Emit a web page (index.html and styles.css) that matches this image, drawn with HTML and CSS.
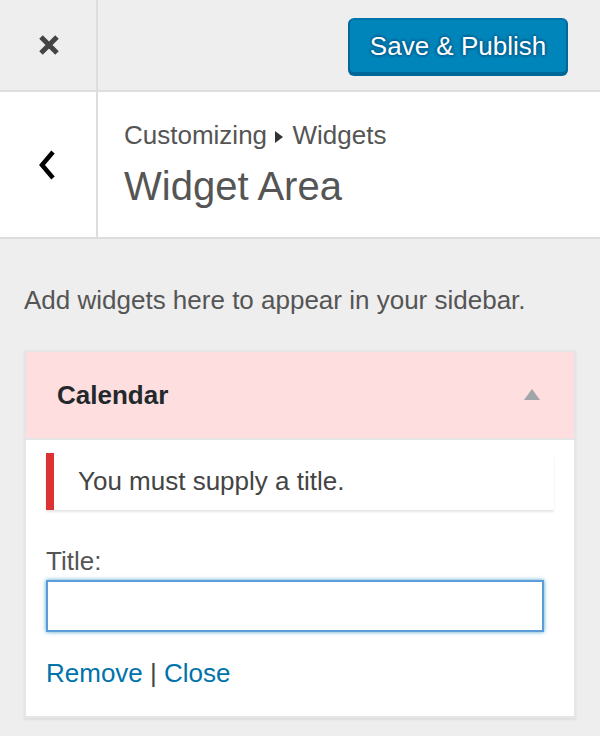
FILE: index.html
```html
<!DOCTYPE html>
<html>
<head>
<meta charset="utf-8">
<link rel="stylesheet" href="styles.css">
</head>
<body>
<div class="topbar">
  <div class="close-cell">
    <svg width="22" height="22" viewBox="0 0 22 22"><path d="M3 3 L19 19 M19 3 L3 19" stroke="#444" stroke-width="5" fill="none"/></svg>
  </div>
  <div class="topbar-right">
    <button class="publish">Save &amp; Publish</button>
  </div>
</div>
<div class="section-head">
  <div class="back-cell">
    <svg width="18" height="30" viewBox="0 0 18 30"><path d="M15 2 L4 15 L15 28" stroke="#000" stroke-width="4.5" fill="none"/></svg>
  </div>
  <div class="title-cell">
    <div class="crumb">Customizing <span class="crumb-arrow"></span> Widgets</div>
    <div class="area-title">Widget Area</div>
  </div>
</div>
<div class="panel">
  <p class="desc">Add widgets here to appear in your sidebar.</p>
  <div class="widget">
    <div class="widget-top">
      <span class="widget-title">Calendar</span>
      <span class="toggle"></span>
    </div>
    <div class="widget-inside">
      <div class="notice">You must supply a title.</div>
      <label class="label">Title:</label>
      <div class="input"></div>
      <div class="actions"><a class="link">Remove</a> <span class="sep">|</span> <a class="link">Close</a></div>
    </div>
  </div>
</div>
</body>
</html>
```
FILE: styles.css
```css
html, body {
  margin: 0;
  padding: 0;
}
body {
  background: #eee;
  font-family: "Liberation Sans", Arial, sans-serif;
  color: #555;
  width: 600px;
  height: 736px;
  overflow: hidden;
}
.topbar {
  display: flex;
  height: 90px;
  border-bottom: 2px solid #ddd;
  background: #eee;
}
.close-cell {
  width: 94px;
  border-right: 2px solid #ddd;
  display: flex;
  align-items: center;
  justify-content: center;
  padding-left: 2px;
}
.topbar-right {
  flex: 1;
  display: flex;
  justify-content: flex-end;
  align-items: flex-start;
  padding: 18px 32px 0 0;
}
.publish {
  width: 220px;
  height: 56px;
  background: #0085ba;
  border: 2px solid #0073aa;
  border-color: #0073aa #006799 #006799;
  border-radius: 6px;
  box-shadow: 0 2px 0 #006799;
  color: #fff;
  font-family: "Liberation Sans", Arial, sans-serif;
  font-size: 26px;
  padding: 0;
  text-shadow: 0 -2px 2px #006799, 2px 0 2px #006799, 0 2px 2px #006799, -2px 0 2px #006799;
}
.section-head {
  display: flex;
  height: 145px;
  background: #fff;
  border-bottom: 2px solid #ddd;
}
.back-cell {
  width: 94px;
  border-right: 2px solid #ddd;
  display: flex;
  align-items: center;
  justify-content: center;
  padding-right: 2px;
}
.title-cell {
  padding: 28px 0 0 26px;
}
.crumb {
  font-size: 26px;
  line-height: 30px;
  color: #555;
}
.crumb-arrow {
  display: inline-block;
  width: 0;
  height: 0;
  border-top: 6px solid transparent;
  border-bottom: 6px solid transparent;
  border-left: 8px solid #333;
  margin: 0 2px 0 1px;
  vertical-align: 1px;
}
.area-title {
  margin-top: 12px;
  font-size: 40px;
  line-height: 48px;
  color: #555;
}
.panel {
  padding: 46px 24px 0;
}
.desc {
  margin: 0 0 35px;
  font-size: 26px;
  line-height: 30px;
  color: #555;
}
.widget {
  background: #fff;
  border: 2px solid #e5e5e5;
  box-shadow: 0 2px 2px rgba(0, 0, 0, 0.07);
}
.widget-top {
  height: 86px;
  background: #fedede;
  border-bottom: 2px solid #e5e5e5;
  display: flex;
  align-items: center;
  justify-content: space-between;
  padding: 0 34px 0 31px;
}
.widget-title {
  font-weight: bold;
  font-size: 26px;
  color: #23282d;
}
.toggle {
  width: 0;
  height: 0;
  border-left: 8px solid transparent;
  border-right: 8px solid transparent;
  border-bottom: 11px solid #a0a5aa;
  margin-top: -2px;
}
.widget-inside {
  padding: 13px 20px 28px;
}
.notice {
  height: 57px;
  box-sizing: border-box;
  border-left: 8px solid #dc3232;
  background: #fff;
  box-shadow: 0 2px 2px rgba(0, 0, 0, 0.1);
  padding: 0 24px;
  display: flex;
  align-items: center;
  font-size: 26px;
  color: #444;
}
.label {
  display: block;
  margin-top: 36px;
  font-size: 26px;
  line-height: 30px;
  color: #555;
}
.input {
  margin-top: 4px;
  width: calc(100% - 10px);
  height: 52px;
  box-sizing: border-box;
  border: 2px solid #5b9dd9;
  box-shadow: 0 0 4px rgba(30, 140, 190, 0.8);
  background: #fff;
}
.actions {
  margin-top: 26px;
  font-size: 26px;
  line-height: 30px;
}
.link {
  color: #0073aa;
}
.sep {
  color: #444;
}
```
